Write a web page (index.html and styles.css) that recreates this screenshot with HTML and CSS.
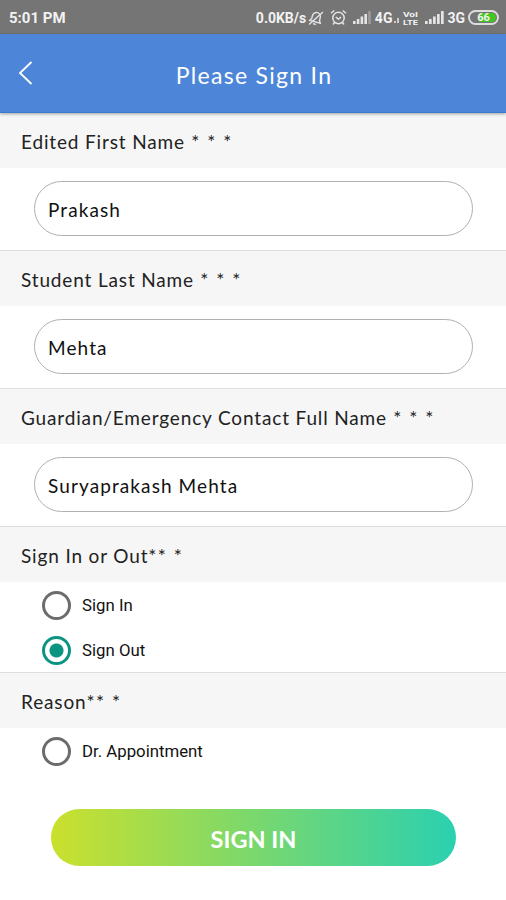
FILE: index.html
```
<!DOCTYPE html>
<html lang="en">
<head>
  <meta charset="UTF-8" />
  <meta name="viewport" content="width=device-width, initial-scale=1" />
  <title>Please Sign In</title>
  <link rel="stylesheet" href="styles.css">
</head>
<body>
  <!-- Status bar -->
  <div class="status-bar">
    <span class="time">5:01 PM</span>
    <div class="status-icons">
      <span class="speed">0.0KB/s</span>
      <svg class="bell" width="16" height="16" viewBox="0 0 16 16" fill="none" stroke="#e4e4e4" stroke-width="1.4">
        <path transform="rotate(15 8 8)" d="M2.5 12h11L12 9.5V6.5a4 4 0 0 0-8 0v3zM6.5 14.3h3" />
        <path d="M1 14.5L15 2" />
      </svg>
      <svg class="alarm" width="17" height="17" viewBox="0 0 17 17" fill="none" stroke="#e4e4e4" stroke-width="1.5">
        <circle cx="8.5" cy="9" r="5.7" />
        <path d="M1 4.3L4.3 1.5M16 4.3L12.7 1.5M5.8 8l2.7 2.2L11 8M4.5 13.5L3 15.5M12.5 13.5l1.5 2" />
      </svg>
      <svg class="signal-one" width="18" height="13" viewBox="0 0 18 13" fill="#e4e4e4">
        <path d="M0 10h2.6v3H0zM3.8 8h2.6v5H3.8zM7.6 5.5h2.6V13H7.6zM11.4 3H14v10h-2.6z" />
        <path d="M15.2 0h2.6v13h-2.6z" opacity=".35" />
      </svg>
      <span class="network">4G</span>
      <svg class="data" width="5" height="5" viewBox="0 0 5 5" fill="#ccc"><path d="M0 3h2v2H0zM3 0h2v5H3z" /></svg>
      <svg class="volte" width="15" height="18" viewBox="0 0 15 18">
        <text x="0" y="7.5" textLength="15" lengthAdjust="spacingAndGlyphs">VoI</text>
        <text x="0" y="16" textLength="15" lengthAdjust="spacingAndGlyphs">LTE</text>
      </svg>
      <svg class="signal-two" width="19" height="13" viewBox="0 0 19 13" fill="#e4e4e4">
        <path d="M0 10h2.7v3H0zM4 8h2.7v5H4zM8 5.5h2.7V13H8zM12 3h2.7v10H12zM16 0h2.7v13H16z" />
      </svg>
      <span class="network">3G</span>
      <span class="battery"><span class="battery-level">66</span></span>
    </div>
  </div>

  <header class="header">
    <svg class="back" width="16" height="26" viewBox="0 0 16 26" fill="none" stroke="#fff" stroke-width="1.8">
      <path d="M13.5 2L2 13l11.5 11" />
    </svg>
    <h1>Please Sign In</h1>
  </header>

  <form class="form">
    <div class="label first">Edited First Name<span class="stars"> * * *</span></div>
    <div class="field">
      <input class="input" type="text" value="Prakash">
    </div>

    <div class="label">Student Last Name<span class="stars"> * * *</span></div>
    <div class="field">
      <input class="input" type="text" value="Mehta">
    </div>

    <div class="label">Guardian/Emergency Contact Full Name<span class="stars"> * * *</span></div>
    <div class="field">
      <input class="input" type="text" value="Suryaprakash Mehta">
    </div>

    <div class="label">Sign In or Out<span class="stars">** *</span></div>
    <div class="options">
      <label class="option"><input type="radio" name="direction">Sign In</label>
      <label class="option"><input type="radio" name="direction" checked>Sign Out</label>
    </div>

    <div class="label">Reason<span class="stars">** *</span></div>
    <div class="options">
      <label class="option"><input type="radio" name="reason">Dr. Appointment</label>
    </div>

    <button class="btn" type="button">SIGN IN</button>
  </form>
</body>
</html>
```
FILE: styles.css
```
* {
  box-sizing: border-box;
}

body {
  margin: 0;
  height: 900px;
  overflow: hidden;
  background-color: #fff;
  color: #222;
  font-family: Lato, sans-serif;
}

/* Status bar */
.status-bar {
  display: flex;
  align-items: center;
  justify-content: space-between;
  height: 34px;
  padding: 1px 7px 0 9px;
  background-color: #757575;
  color: #f2f2f2;
  font-family: Roboto, sans-serif;
  font-weight: 700;
}

.time {
  font-size: 15px;
}

.status-icons {
  display: flex;
  align-items: center;
  font-size: 14px;
}

.speed {
  width: 51px;
  white-space: nowrap;
}

.bell {
  margin-left: 1px;
}

.alarm {
  margin-left: 6px;
}

.signal-one {
  margin: 0 4px 0 6px;
}

.data {
  margin: 6px 4px 0 2px;
}

.volte {
  fill: #f2f2f2;
  font-size: 7px;
}

.signal-two {
  margin: 0 3px 0 7px;
}

.battery {
  display: flex;
  width: 31px;
  height: 15px;
  margin-left: 3px;
  padding: 1px;
  border: 2px solid #ddd;
  border-radius: 8px;
}

.battery-level {
  width: 100%;
  border-radius: 5px;
  background: linear-gradient(to right, #757575 32%, #43c522 32%);
  font-size: 11px;
  line-height: 10px;
  text-align: center;
}

/* Header */
.header {
  position: relative;
  display: flex;
  align-items: center;
  height: 79px;
  padding: 0 18px;
  background-color: #4d86d8;
  border-bottom: 1px solid #397bd0;
  box-shadow: 0 1px 3px rgba(0, 0, 0, 0.35);
  color: #fff;
}

.back {
  margin-bottom: 1px;
}

.header h1 {
  flex: 1;
  margin: 4px 0 0;
  padding-right: 14px;
  font-size: 23px;
  font-weight: 400;
  letter-spacing: 1.3px;
  text-align: center;
}

/* Form */
.form {
  display: flex;
  flex-direction: column;
}

.label {
  height: 56px;
  padding: 1px 21px 0;
  border-top: 1px solid #dedede;
  background-color: #f6f6f6;
  font-size: 19px;
  line-height: 56px;
  letter-spacing: 0.85px;
  white-space: pre;
}

.label.first {
  height: 55px;
  border-top: 0;
}

.stars {
  letter-spacing: 1.5px;
}

.field {
  height: 82px;
  padding: 13px 33px 0 34px;
}

.input {
  display: block;
  width: 100%;
  height: 55px;
  padding: 2px 13px 0;
  border: 1px solid #aeb2b2;
  border-radius: 28px;
  background-color: #fff;
  color: #111;
  font-family: Lato, sans-serif;
  font-size: 19px;
  letter-spacing: 1.1px;
  outline: none;
}

.options {
  padding-left: 42px;
}

.option {
  display: flex;
  align-items: center;
  gap: 11px;
  height: 45px;
  padding-top: 1px;
  color: #111;
  font-family: Roboto, sans-serif;
  font-size: 16.8px;
}

.option input {
  appearance: none;
  width: 29px;
  height: 29px;
  margin: 0;
  border: 3px solid #6c6c6c;
  border-radius: 50%;
}

.option input:checked {
  border-color: #0c9482;
  background: radial-gradient(circle, #0c9482 6.5px, #fff 7.5px);
}

.btn {
  width: 405px;
  height: 57px;
  margin: 36px 0 0 51px;
  padding-top: 3px;
  border: none;
  border-radius: 29px;
  background: linear-gradient(to right, #cbe02d, #7ad86d 50%, #2bd0b0);
  color: #fff;
  font-family: Lato, sans-serif;
  font-size: 23.5px;
  font-weight: 700;
}
```
